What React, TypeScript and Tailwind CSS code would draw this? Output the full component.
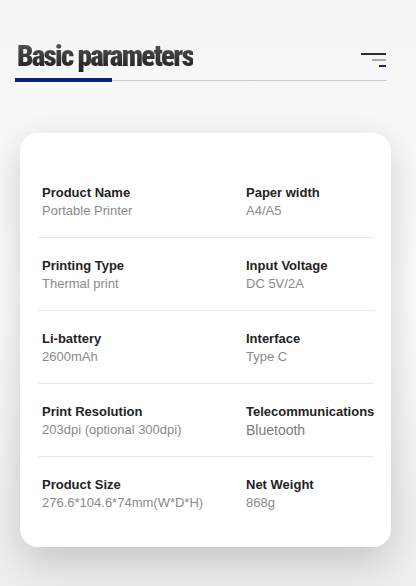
import React from "react";

type Item = { label: string; value: string; big?: boolean };

const rows: [Item, Item][] = [
  [
    { label: "Product Name", value: "Portable Printer" },
    { label: "Paper width", value: "A4/A5" },
  ],
  [
    { label: "Printing Type", value: "Thermal print" },
    { label: "Input Voltage", value: "DC 5V/2A" },
  ],
  [
    { label: "Li-battery", value: "2600mAh" },
    { label: "Interface", value: "Type C" },
  ],
  [
    { label: "Print Resolution", value: "203dpi (optional 300dpi)" },
    { label: "Telecommunications", value: "Bluetooth", big: true },
  ],
  [
    { label: "Product Size", value: "276.6*104.6*74mm(W*D*H)" },
    { label: "Net Weight", value: "868g" },
  ],
];

function Cell({ item }: { item: Item }) {
  return (
    <div className="flex flex-col">
      <div className="text-[13px] leading-[18px] font-bold text-[#232323] whitespace-nowrap">
        {item.label}
      </div>
      <div
        className={
          item.big
            ? "text-[14px] leading-[18px] text-[#7c7c7c] whitespace-nowrap"
            : "text-[13px] leading-[18px] text-[#8a8a8a] whitespace-nowrap"
        }
      >
        {item.value}
      </div>
    </div>
  );
}

export default function App() {
  return (
    <div className="w-[416px] min-h-[586px] overflow-hidden bg-gradient-to-b from-[#f4f4f4] via-[#ffffff] to-[#efefef] font-['Liberation_Sans',Arial,sans-serif]">
      {/* Header */}
      <div className="ml-[15px] w-[372px] pt-[39px]">
        <div className="flex justify-between items-start">
          <div className="pl-[2px] font-['Roboto_Condensed','Liberation_Sans',sans-serif] text-[29px] leading-[34px] font-black tracking-[-1.7px] bg-gradient-to-b from-[#5c5c5c] to-[#1c1c1c] bg-clip-text text-transparent whitespace-nowrap">
            Basic parameters
          </div>
          <div className="mt-[14px] mr-[1px] flex flex-col items-end w-[25px]">
            <div className="w-[25px] h-[2px] bg-[#2e2e2e]" />
            <div className="mt-[4px] w-[14px] h-[2px] bg-[#a8a8a8]" />
            <div className="mt-[4px] w-[7px] h-[2px] bg-[#1b2a80]" />
          </div>
        </div>
        <div className="mt-[5px] flex items-center h-[4px]">
          <div className="w-[97px] h-[4px] bg-[#0d2180]" />
          <div className="flex-1 h-px bg-[#cacaca]" />
        </div>
      </div>

      {/* Card */}
      <div className="ml-[20px] mt-[51px] w-[371px] rounded-[18px] bg-white shadow-[0_14px_44px_rgba(0,0,0,0.2)] pt-[32px] pb-[18px] pr-[17px] pl-[18px]">
        {rows.map((r, i) => (
          <div
            key={i}
            className={
              i < rows.length - 1
                ? "grid grid-cols-[204px_1fr] pt-[19px] pb-[17px] pl-[4px] border-b border-[#e8e8e8]"
                : "grid grid-cols-[204px_1fr] pt-[19px] pb-[17px] pl-[4px]"
            }
          >
            <Cell item={r[0]} />
            <Cell item={r[1]} />
          </div>
        ))}
      </div>
    </div>
  );
}
